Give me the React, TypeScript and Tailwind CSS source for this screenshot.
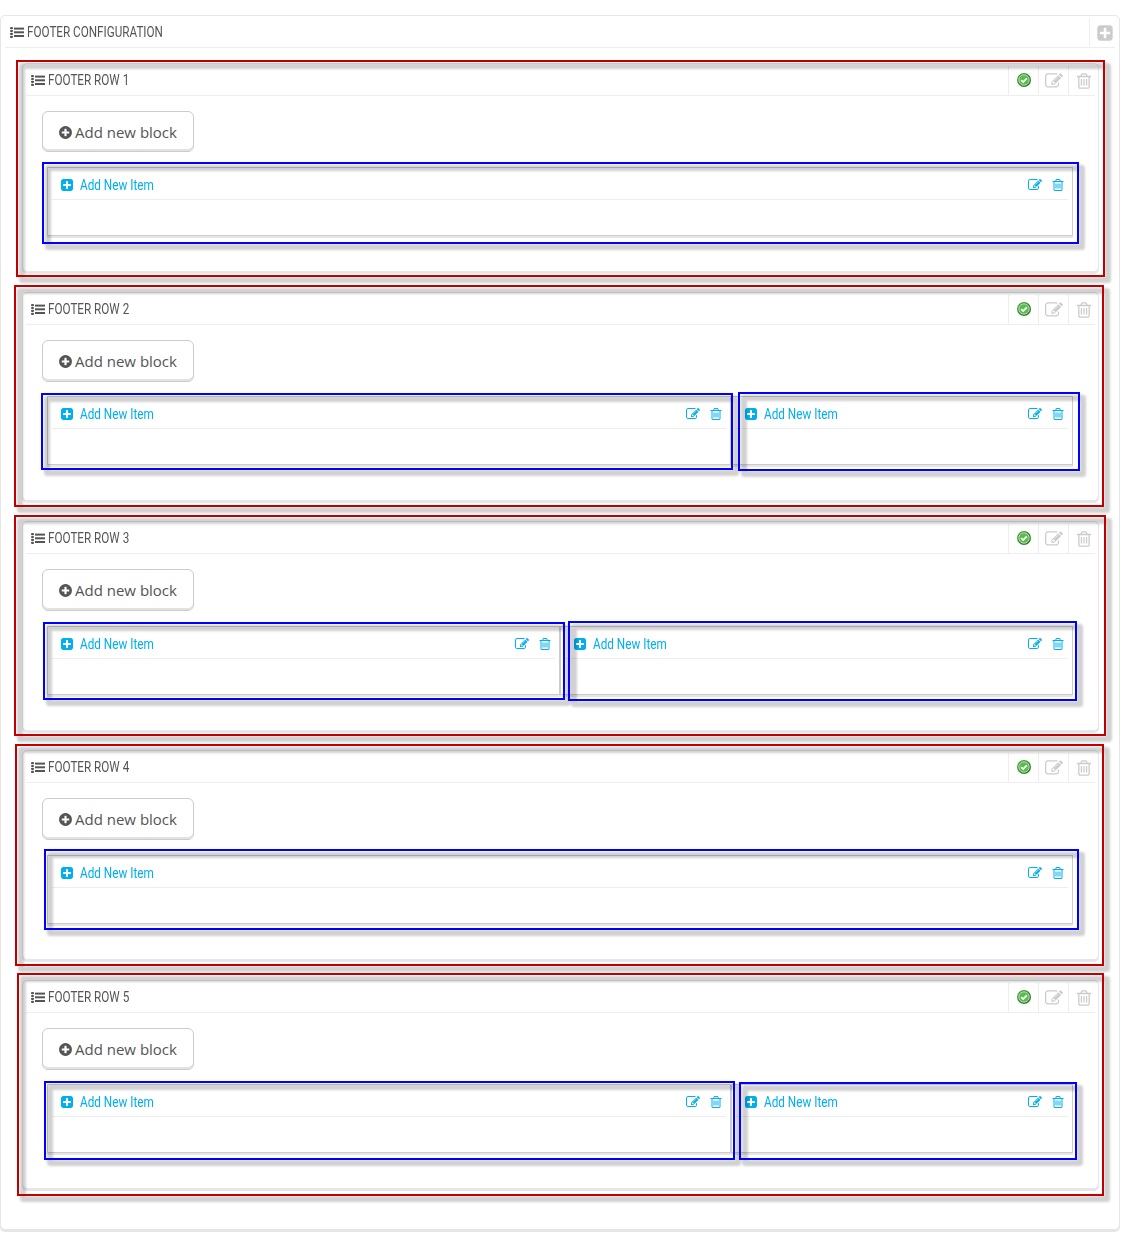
import React from "react";

const PATHS = {
  edit: "M888 1184l116-116-152-152-116 116v56h96v96h56zm440-720q-16-16-33 1l-350 350q-17 17-1 33t33-1l350-350q17-17 1-33zm80 594v190q0 119-84.5 203.5t-203.5 84.5h-832q-119 0-203.5-84.5t-84.5-203.5v-832q0-119 84.5-203.5t203.5-84.5h832q63 0 117 25 15 7 18 23 3 17-9 29l-49 49q-14 14-32 8-23-6-45-6h-832q-66 0-113 47t-47 113v832q0 66 47 113t113 47h832q66 0 113-47t47-113v-126q0-13 9-22l64-64q15-15 35-7t20 29zm-96-738l288 288-672 672h-288v-288zm444 132l-92 92-288-288 92-92q28-28 68-28t68 28l152 152q28 28 28 68t-28 68z",
  trash: "M704 736v576q0 14-9 23t-23 9h-64q-14 0-23-9t-9-23v-576q0-14 9-23t23-9h64q14 0 23 9t9 23zm256 0v576q0 14-9 23t-23 9h-64q-14 0-23-9t-9-23v-576q0-14 9-23t23-9h64q14 0 23 9t9 23zm256 0v576q0 14-9 23t-23 9h-64q-14 0-23-9t-9-23v-576q0-14 9-23t23-9h64q14 0 23 9t9 23zm128 724v-948h-896v948q0 22 7 40.5t14.5 27 10.5 8.5h832q3 0 10.5-8.5t14.5-27 7-40.5zm-672-1076h448l-48-117q-7-9-17-11h-317q-10 2-17 11zm928 32v64q0 14-9 23t-23 9h-96v948q0 83-47 143.5t-113 60.5h-832q-66 0-113-58.5t-47-141.5v-952h-96q-14 0-23-9t-9-23v-64q0-14 9-23t23-9h309l70-167q15-37 54-63t79-26h320q40 0 79 26t54 63l70 167h309q14 0 23 9t9 23z",
  plusSquare: "M1408 960v-128q0-26-19-45t-45-19h-320v-320q0-26-19-45t-45-19h-128q-26 0-45 19t-19 45v320h-320q-26 0-45 19t-19 45v128q0 26 19 45t45 19h320v320q0 26 19 45t45 19h128q26 0 45-19t19-45v-320h320q26 0 45-19t19-45zm256-544v960q0 119-84.5 203.5t-203.5 84.5h-960q-119 0-203.5-84.5t-84.5-203.5v-960q0-119 84.5-203.5t203.5-84.5h960q119 0 203.5 84.5t84.5 203.5z",
  plusCircle: "M1344 960v-128q0-26-19-45t-45-19h-256v-256q0-26-19-45t-45-19h-128q-26 0-45 19t-19 45v256h-256q-26 0-45 19t-19 45v128q0 26 19 45t45 19h256v256q0 26 19 45t45 19h128q26 0 45-19t19-45v-256h256q26 0 45-19t19-45zm320-64q0 209-103 385.5t-279.5 279.5-385.5 103-385.5-103-279.5-279.5-103-385.5 103-385.5 279.5-279.5 385.5-103 385.5 103 279.5 279.5 103 385.5z",
};

function Icon({ name, className }: { name: keyof typeof PATHS; className: string }) {
  return (
    <svg viewBox="0 0 1792 1792" fill="currentColor" className={"shrink-0 " + className}>
      <path d={PATHS[name]} />
    </svg>
  );
}

function ListIcon() {
  return (
    <svg viewBox="0 0 14 12" className="h-3 w-3.5 shrink-0" fill="#555">
      <rect x="0" y="1" width="3" height="2.2" rx="1" />
      <rect x="0" y="3.9" width="3" height="2.2" rx="1" />
      <rect x="0" y="6.8" width="3" height="2.2" rx="1" />
      <rect x="0" y="9.7" width="3" height="2.2" rx="1" />
      <rect x="4" y="1.6" width="10" height="2" />
      <rect x="4" y="5.3" width="10" height="2" />
      <rect x="4" y="9" width="10" height="2" />
    </svg>
  );
}

function CheckIcon() {
  return (
    <svg viewBox="0 0 14 14" className="size-3.5">
      <defs>
        <linearGradient id="ok" x1="0" y1="0" x2="1" y2="1">
          <stop offset="0" stopColor="#4fae45" />
          <stop offset="1" stopColor="#1f7417" />
        </linearGradient>
      </defs>
      <circle cx="7" cy="7" r="7" fill="url(#ok)" />
      <circle cx="7" cy="7" r="5.2" fill="#5fb855" stroke="#b5e0ae" strokeWidth="1" />
      <path d="M4.2 7.2l2 1.9 3.6-3.7" fill="none" stroke="#fff" strokeWidth="1.8" />
    </svg>
  );
}

/* Highlight rectangle with an offset shadow, laid over a panel. */
function Frame({ place, color }: { place: string; color: string }) {
  return (
    <div className={"pointer-events-none absolute z-10 " + place}>
      <div className="absolute top-[3px] right-[-6px] bottom-[-6px] left-[3px] rounded-[3px] border-[6px] border-black/[0.18] blur-[1px]" />
      <div className={"absolute inset-0 border-2 " + color} />
    </div>
  );
}

type BlockData = { width: string; frame: string };
type RowData = { title: string; size: string; button: string; frame: string; blocks: BlockData[] };

const ROWS: RowData[] = [
  {
    title: "FOOTER ROW 1", size: "mt-[15px] h-[209px]", button: "h-[41px] mb-[15px]",
    frame: "top-[-4px] left-[-7px] w-[1089px] h-[217px]",
    blocks: [{ width: "w-[1026px]", frame: "top-[-6px] left-[-6px] w-[1037px] h-[82px]" }],
  },
  {
    title: "FOOTER ROW 2", size: "mt-5 h-[209px]", button: "h-[42px] mb-[14px]",
    frame: "top-[-8px] left-[-9px] w-[1090px] h-[222px]",
    blocks: [
      { width: "w-[684px]", frame: "top-[-4px] left-[-7px] w-[692px] h-[77px]" },
      { width: "w-[342px]", frame: "top-[-5px] left-[6px] w-[342px] h-[79px]" },
    ],
  },
  {
    title: "FOOTER ROW 3", size: "mt-5 h-[210px]", button: "h-[42px] mb-[15px]",
    frame: "top-[-7px] left-[-9px] w-[1092px] h-[221px]",
    blocks: [
      { width: "w-[513px]", frame: "top-[-5px] left-[-5px] w-[522px] h-[78px]" },
      { width: "w-[513px]", frame: "top-[-6px] left-[7px] w-[509px] h-[80px]" },
    ],
  },
  {
    title: "FOOTER ROW 4", size: "mt-[19px] h-[210px]", button: "h-[42px] mb-[15px]",
    frame: "top-[-7px] left-[-8px] w-[1089px] h-[222px]",
    blocks: [{ width: "w-[1026px]", frame: "top-[-7px] left-[-4px] w-[1035px] h-[81px]" }],
  },
  {
    title: "FOOTER ROW 5", size: "mt-5 h-[209px]", button: "h-[42px] mb-[14px]",
    frame: "top-[-8px] left-[-6px] w-[1087px] h-[223px]",
    blocks: [
      { width: "w-[684px]", frame: "top-[-4px] left-[-4px] w-[691px] h-[79px]" },
      { width: "w-[342px]", frame: "top-[-3px] left-[7px] w-[338px] h-[78px]" },
    ],
  },
];

function Title({ children }: { children: React.ReactNode }) {
  return (
    <span className="block origin-left scale-x-[0.835] font-['Roboto',sans-serif] text-sm leading-5 whitespace-nowrap text-[#555]">
      {children}
    </span>
  );
}

function Block({ block }: { block: BlockData }) {
  return (
    <div className={"relative h-[69px] border border-[#ccc] bg-white px-1 shadow-[0_2px_0_#e6e6e6] " + block.width}>
      <div className="flex h-8 items-center border-b border-[#eee] pr-[3px] pl-[8px] text-[#00aff0]">
        <Icon name="plusSquare" className="mt-[3px] size-[14px]" />
        <div className="mt-0.5 ml-[6px] w-[74px]">
          <span className="block origin-left scale-x-[0.84] font-['Roboto',sans-serif] text-sm leading-5 whitespace-nowrap">
            Add New Item
          </span>
        </div>
        <Icon name="edit" className="mt-[3px] ml-auto size-[14px]" />
        <Icon name="trash" className="mt-[3px] ml-[9px] size-[14px]" />
      </div>
      <Frame place={block.frame} color="border-[#00f]" />
    </div>
  );
}

function Row({ row }: { row: RowData }) {
  return (
    <section className={"relative rounded-[5px] border border-[#e6e6e6] bg-white px-[3px] shadow-[0_2px_0_#e6e6e6] " + row.size}>
      <header className="flex h-8 items-center border-b border-[#eee] pl-[5px]">
        <ListIcon />
        <div className="ml-[3px] w-[100px]">
          <Title>{row.title}</Title>
        </div>
        <div className="ml-auto flex h-[29px] self-end text-[#ccc]">
          <span className="flex w-[30px] items-center justify-center border-l border-[#eee] pb-[2px]"><CheckIcon /></span>
          <span className="flex w-[30px] items-center justify-center border-l border-[#eee]"><Icon name="edit" className="size-[18px]" /></span>
          <span className="flex w-[27px] items-center justify-center border-l border-[#eee] pl-[4px]"><Icon name="trash" className="mt-px size-[18px]" /></span>
        </div>
      </header>
      <button className={"mt-[15px] ml-4 flex w-[152px] items-center rounded-[6px] border border-[#ccc] bg-white pl-[15px] text-[#555] shadow-[inset_0_-2px_0_#e2e2e2] " + row.button}>
        <Icon name="plusCircle" className="mt-px size-[15px]" />
        <span className="ml-[2px] font-['Open_Sans',sans-serif] text-[15px] leading-5 whitespace-nowrap">Add new block</span>
      </button>
      <div className="ml-[21px] flex">
        {row.blocks.map((block, i) => (
          <Block key={i} block={block} />
        ))}
      </div>
      <Frame place={row.frame} color="border-[#c00000]" />
    </section>
  );
}

export default function App() {
  return (
    <div className="h-[1247px] w-[1130px] bg-white pt-[15px]">
      <main className="h-[1215px] w-[1120px] rounded-[5px] border border-[#e6e6e6] bg-white px-1 shadow-[0_2px_0_#e6e6e6]">
        <header className="flex h-8 items-center border-b border-[#eee] pl-[5px]">
          <ListIcon />
          <div className="ml-[3px] w-[140px]">
            <Title>FOOTER CONFIGURATION</Title>
          </div>
          <div className="ml-auto flex h-[29px] w-[26px] items-center justify-center self-end border-l border-[#eee] pl-[4px] text-[#ccc]">
            <Icon name="plusSquare" className="size-[18px]" />
          </div>
        </header>
        <div className="mr-4 ml-[17px]">
          {ROWS.map((row) => (
            <Row key={row.title} row={row} />
          ))}
        </div>
      </main>
    </div>
  );
}
